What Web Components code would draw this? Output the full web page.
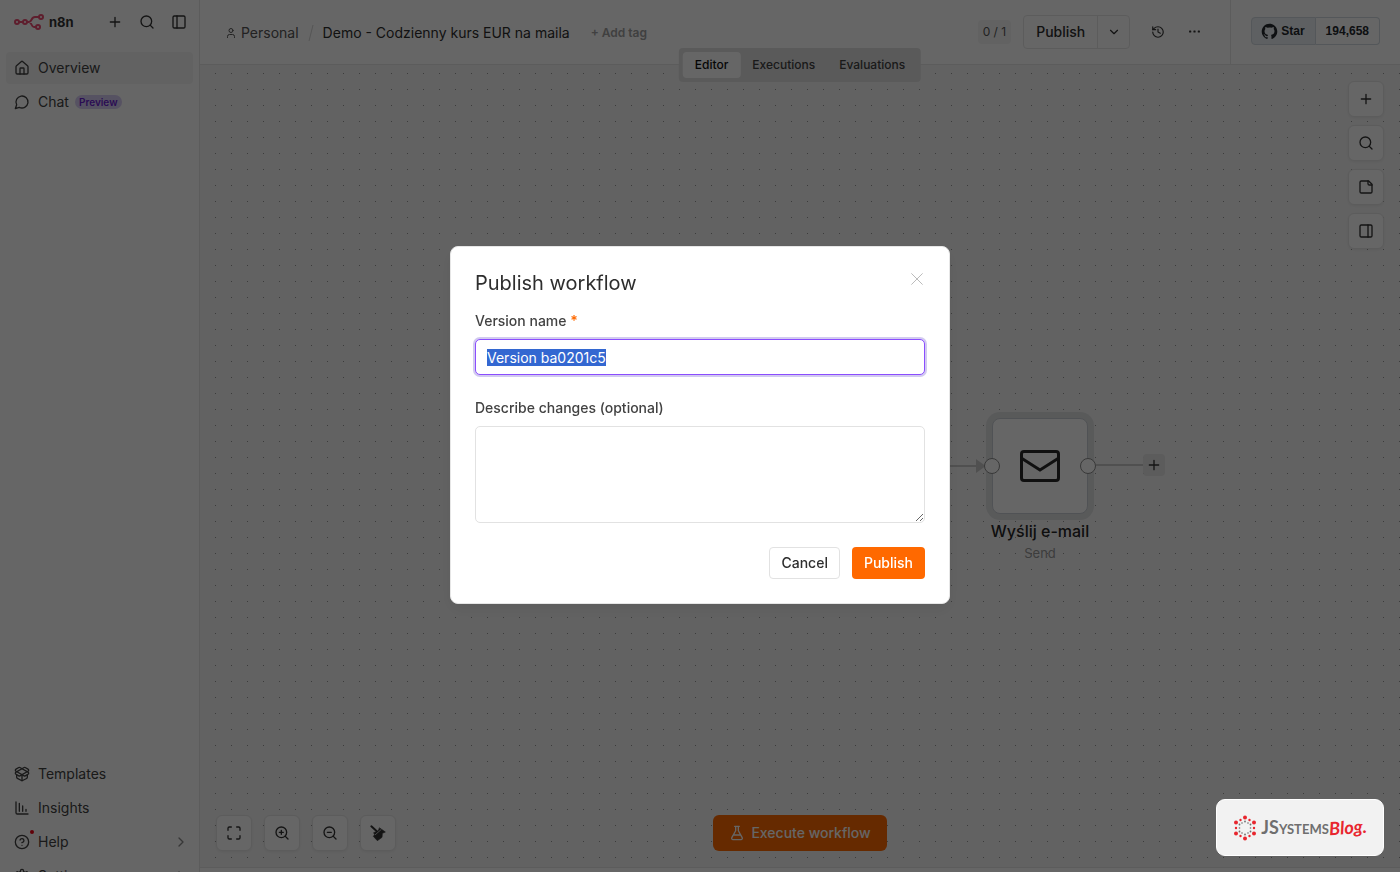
<!DOCTYPE html>
<html lang="en">
<head>
<meta charset="utf-8">
<meta name="viewport" content="width=device-width, initial-scale=1">
<title>n8n - Publish workflow</title>
<style>
  html, body { height: 100%; }
  body {
    margin: 0;
    overflow: hidden;
    font: 400 14px/20px Inter, "Liberation Sans", sans-serif;
    color: #424242;
    --line: #e6e6e6;
    --ink: #2e2e2e;
    --brand: #ff6900;
  }
</style>
</head>
<body>
<workflow-app></workflow-app>

<script>
const ICONS = {
  plus: '<path d="M5 12h14M12 5v14"/>',
  search: '<circle cx="11" cy="11" r="8"/><path d="m21 21-4.3-4.3"/>',
  panelLeft: '<rect width="18" height="18" x="3" y="3" rx="2"/><path d="M9 3v18"/>',
  panelRight: '<rect width="18" height="18" x="3" y="3" rx="2"/><path d="M15 3v18"/>',
  house: '<path d="M15 21v-8a1 1 0 0 0-1-1h-4a1 1 0 0 0-1 1v8"/><path d="M3 10a2 2 0 0 1 .709-1.528l7-5.999a2 2 0 0 1 2.582 0l7 5.999A2 2 0 0 1 21 10v9a2 2 0 0 1-2 2H5a2 2 0 0 1-2-2z"/>',
  chat: '<path d="M7.9 20A9 9 0 1 0 4 16.1L2 22Z"/>',
  box: '<path d="M12 22v-9"/><path d="M15.17 2.21a1.67 1.67 0 0 1 1.63 0L21 4.57a1.93 1.93 0 0 1 0 3.36L8.82 14.79a1.655 1.655 0 0 1-1.64 0L3 12.43a1.93 1.93 0 0 1 0-3.36z"/><path d="M20 13v3.87a2.06 2.06 0 0 1-1.11 1.83l-6 3.08a1.93 1.93 0 0 1-1.78 0l-6-3.08A2.06 2.06 0 0 1 4 16.87V13"/><path d="M21 12.43a1.93 1.93 0 0 0 0-3.36L8.83 2.2a1.64 1.64 0 0 0-1.63 0L3 4.57a1.93 1.93 0 0 0 0 3.36l12.18 6.86a1.636 1.636 0 0 0 1.63 0z"/>',
  chart: '<path d="M13 17V9M18 17v-3M8 17V5"/><path d="M3 3v16a2 2 0 0 0 2 2h16"/>',
  help: '<circle cx="12" cy="12" r="10"/><path d="M9.09 9a3 3 0 0 1 5.83 1c0 2-3 3-3 3M12 17h.01"/>',
  gear: '<path d="M12.22 2h-.44a2 2 0 0 0-2 2v.18a2 2 0 0 1-1 1.73l-.43.25a2 2 0 0 1-2 0l-.15-.08a2 2 0 0 0-2.73.73l-.22.38a2 2 0 0 0 .73 2.73l.15.1a2 2 0 0 1 1 1.72v.51a2 2 0 0 1-1 1.74l-.15.09a2 2 0 0 0-.73 2.73l.22.38a2 2 0 0 0 2.73.73l.15-.08a2 2 0 0 1 2 0l.43.25a2 2 0 0 1 1 1.73V20a2 2 0 0 0 2 2h.44a2 2 0 0 0 2-2v-.18a2 2 0 0 1 1-1.73l.43-.25a2 2 0 0 1 2 0l.15.08a2 2 0 0 0 2.73-.73l.22-.39a2 2 0 0 0-.73-2.73l-.15-.08a2 2 0 0 1-1-1.74v-.5a2 2 0 0 1 1-1.74l.15-.09a2 2 0 0 0 .73-2.73l-.22-.38a2 2 0 0 0-2.73-.73l-.15.08a2 2 0 0 1-2 0l-.43-.25a2 2 0 0 1-1-1.73V4a2 2 0 0 0-2-2z"/><circle cx="12" cy="12" r="3"/>',
  chevronRight: '<path d="m9 18 6-6-6-6"/>',
  chevronDown: '<path d="m6 9 6 6 6-6"/>',
  user: '<path d="M19 21v-2a4 4 0 0 0-4-4H9a4 4 0 0 0-4 4v2"/><circle cx="12" cy="7" r="4"/>',
  history: '<path d="M3 12a9 9 0 1 0 9-9 9.75 9.75 0 0 0-6.74 2.74L3 8"/><path d="M3 3v5h5M12 7v5l4 2"/>',
  dots: '<g fill="currentColor" stroke="none"><rect x="2" y="10" width="4" height="4" rx="1"/><rect x="10" y="10" width="4" height="4" rx="1"/><rect x="18" y="10" width="4" height="4" rx="1"/></g>',
  note: '<path d="M16 3H5a2 2 0 0 0-2 2v14a2 2 0 0 0 2 2h14a2 2 0 0 0 2-2V8Z"/><path d="M15 3v4a2 2 0 0 0 2 2h4"/>',
  maximize: '<path d="M8 3H5a2 2 0 0 0-2 2v3M21 8V5a2 2 0 0 0-2-2h-3M3 16v3a2 2 0 0 0 2 2h3M16 21h3a2 2 0 0 0 2-2v-3"/>',
  zoomIn: '<circle cx="11" cy="11" r="8"/><path d="m21 21-4.35-4.35M11 8v6M8 11h6"/>',
  zoomOut: '<circle cx="11" cy="11" r="8"/><path d="m21 21-4.35-4.35M8 11h6"/>',
  broom: '<path stroke-width="3" d="M2 2l9 8"/><path fill="currentColor" stroke-width="1" d="M14.500 4.500 23 10.500l-4.500 2-.5 6-7 5L5 17l2-2.500-1.500-3L12 9z"/><path stroke="#fff" stroke-width="1" d="M8 14.500 16.500 7"/>',
  flask: '<path d="M14 2v6a2 2 0 0 0 .245.96l5.51 10.08A2 2 0 0 1 18 22H6a2 2 0 0 1-1.755-2.96l5.51-10.08A2 2 0 0 0 10 8V2M6.453 15h11.094M8.5 2h7"/>',
  close: '<path d="M4 4l16 16M20 4 4 20"/>',
  github: '<path fill="currentColor" stroke="none" d="M12 1C5.925 1 1 5.925 1 12c0 4.867 3.149 8.979 7.521 10.436.55.096.756-.233.756-.522 0-.262-.013-1.128-.013-2.049-2.764.509-3.479-.674-3.699-1.292-.124-.317-.66-1.293-1.127-1.554-.385-.207-.936-.715-.014-.729.866-.014 1.485.797 1.691 1.128.99 1.663 2.571 1.196 3.204.907.096-.715.385-1.196.701-1.471-2.448-.275-5.005-1.224-5.005-5.432 0-1.196.426-2.186 1.128-2.956-.111-.275-.496-1.402.11-2.915 0 0 .921-.288 3.024 1.128a10.193 10.193 0 0 1 2.75-.371c.936 0 1.871.123 2.75.371 2.104-1.43 3.025-1.128 3.025-1.128.605 1.513.221 2.64.111 2.915.701.77 1.127 1.747 1.127 2.956 0 4.222-2.571 5.157-5.019 5.432.399.344.743 1.004.743 2.035 0 1.471-.014 2.654-.014 3.025 0 .289.206.632.756.522C19.851 20.979 23 16.854 23 12c0-6.075-4.925-11-11-11Z"/>'
};

const BASE = `
  *, *::before, *::after { box-sizing: border-box; }
  button { font: inherit; color: inherit; margin: 0; padding: 0; border: 0; background: none; cursor: pointer; }
  a { color: inherit; text-decoration: none; }
`;

function define(name, css, html, ready) {
  const template = document.createElement('template');
  customElements.define(name, class extends HTMLElement {
    connectedCallback() {
      if (this.shadowRoot) return;
      template.innerHTML = `<style>${BASE}${css}</style>` + (typeof html === 'function' ? html(this) : html);
      this.attachShadow({ mode: 'open' }).append(template.content.cloneNode(true));
      if (ready) ready(this.shadowRoot, this);
    }
  });
}

define('ui-icon', `
  :host { display: inline-flex; flex: none; }
  svg { display: block; fill: none; stroke: currentColor; stroke-linecap: round; stroke-linejoin: round; }
`, el => {
  const size = el.getAttribute('size') || 16;
  return `<svg width="${size}" height="${size}" viewBox="0 0 24 24" stroke-width="${el.getAttribute('weight') || 2}" aria-hidden="true">${ICONS[el.getAttribute('name')]}</svg>`;
});

/* Sidebar */
define('nav-item', `
  :host { display: block; }
  a { display: flex; align-items: center; gap: 8px; height: 32px; padding: 0 8px; border-radius: 4px; color: #424242; }
  :host([active]) a { background: #f5f5f5; }
  .icon { position: relative; display: flex; }
  .dot { position: absolute; top: -4px; right: -4px; width: 4px; height: 4px; border-radius: 50%; background: #f00015; }
  .more { margin-left: auto; color: #8a8a8a; display: flex; margin-right: -4px; }
`, el => `
  <a href="#">
    <span class="icon"><ui-icon name="${el.getAttribute('icon')}"></ui-icon>${el.hasAttribute('notify') ? '<span class="dot"></span>' : ''}</span>
    <slot></slot>
    ${el.hasAttribute('expandable') ? '<span class="more"><ui-icon name="chevronRight"></ui-icon></span>' : ''}
  </a>`);

define('preview-badge', `
  :host { display: block; padding: 0 4px; border-radius: 8px; background: #d8ccf5; color: #6b1fd1; font-size: 10px; line-height: 14px; font-weight: 600; margin-left: -2px; }
`, `<slot></slot>`);

define('side-bar', `
  :host { display: flex; flex-direction: column; width: 200px; flex: none; overflow: hidden; background: #fff; border-right: 1px solid var(--line); }
  header { display: flex; align-items: center; height: 44px; padding: 0 12px 0 14px; gap: 16px; color: #333; }
  .brand { display: flex; align-items: center; gap: 5px; margin-right: auto; font-size: 13px; font-weight: 700; }
  button { display: flex; }
  nav { display: flex; flex-direction: column; gap: 2px; padding: 8px 6px; flex: 1; }
  .foot { margin-top: auto; display: flex; flex-direction: column; gap: 2px; margin-bottom: -28px; }
`, `
  <header>
    <a class="brand" href="#">
      <svg width="30" height="16" viewBox="0 0 30 16" fill="none" stroke="#ea4b71" stroke-width="2" aria-hidden="true">
        <circle cx="3" cy="8" r="2"/><circle cx="11" cy="8" r="2"/><circle cx="27" cy="3" r="2"/><circle cx="24" cy="13" r="2"/>
        <path d="M5 8h4M13 8h2c3 0 2-5 6-5h4M15 8c3 0 2 5 5 5h2"/>
      </svg>
      <span>n8n</span>
    </a>
    <button aria-label="Create"><ui-icon name="plus"></ui-icon></button>
    <button aria-label="Search"><ui-icon name="search"></ui-icon></button>
    <button aria-label="Toggle sidebar"><ui-icon name="panelLeft"></ui-icon></button>
  </header>
  <nav>
    <nav-item icon="house" active>Overview</nav-item>
    <nav-item icon="chat">Chat <preview-badge>Preview</preview-badge></nav-item>
    <div class="foot">
      <nav-item icon="box">Templates</nav-item>
      <nav-item icon="chart">Insights</nav-item>
      <nav-item icon="help" notify expandable>Help</nav-item>
      <nav-item icon="gear" expandable>Settings</nav-item>
    </div>
  </nav>`);

/* Header */
define('github-stars', `
  :host { display: flex; height: 28px; font: 700 12px/26px "Liberation Sans", Arial, sans-serif; color: #25292e; }
  a { display: flex; align-items: center; border: 1px solid #d1d9e0; }
  .star { gap: 3px; padding: 0 10px 0 9px; background: #ebf0f4; border-radius: 4px 0 0 4px; }
  .count { padding: 0 10px; border-left: 0; border-radius: 0 4px 4px 0; background: #fff; }
`, `<a class="star" href="#"><ui-icon name="github" size="17"></ui-icon>Star</a><a class="count" href="#">194,658</a>`);

define('workflow-header', `
  :host { display: flex; height: 65px; flex: none; background: #fff; border-bottom: 1px solid var(--line); }
  .crumbs { display: flex; align-items: center; padding: 2px 0 0 25px; flex: 1; min-width: 0; white-space: nowrap; }
  .owner { display: flex; align-items: center; gap: 4px; color: #555; }
  .slash { width: 24px; display: flex; justify-content: center; }
  .name { color: var(--ink); }
  .tag { margin-left: 21px; font-size: 12px; font-weight: 600; color: #a0a0a0; }
  .actions { display: flex; align-items: center; color: #333; margin-bottom: 1px; }
  .count { padding: 0 5px; margin-right: 12px; line-height: 24px; border-radius: 4px; background: #f5f5f5; font-size: 12px; color: #555; }
  .split { display: flex; height: 34px; border: 1px solid var(--line); border-radius: 4px; margin-right: 20px; }
  .split button { display: flex; align-items: center; justify-content: center; padding: 0 12px; font-weight: 500; color: var(--ink); }
  .split button + button { padding: 0; width: 32px; border-left: 1px solid var(--line); }
  .icon { display: flex; justify-content: center; width: 16px; margin-right: 20px; }
  .icon + .icon { margin-right: 28px; }
  .stars { display: flex; align-items: center; padding: 0 20px; border-left: 1px solid var(--line); padding-bottom: 2px; }
`, `
  <div class="crumbs">
    <a class="owner" href="#"><ui-icon name="user" size="12"></ui-icon>Personal</a>
    <span class="slash"><svg width="8" height="18" viewBox="0 0 8 18" stroke="#d4d4d4" aria-hidden="true"><path d="M6 1 2 17"/></svg></span>
    <span class="name">Demo - Codzienny kurs EUR na maila</span>
    <button class="tag">+ Add tag</button>
  </div>
  <div class="actions">
    <span class="count">0 / 1</span>
    <div class="split"><button>Publish</button><button aria-label="Publish options"><ui-icon name="chevronDown" size="14"></ui-icon></button></div>
    <button class="icon" aria-label="History"><ui-icon name="history" size="14"></ui-icon></button>
    <button class="icon" aria-label="More"><ui-icon name="dots" size="13"></ui-icon></button>
  </div>
  <div class="stars"><github-stars></github-stars></div>`);

define('view-tabs', `
  :host { display: flex; padding: 4px; border-radius: 4px; background: #e2e2e2; }
  button { height: 26px; padding: 0 12px; border-radius: 4px; font-size: 12px; font-weight: 500; color: #424242; }
  [aria-selected=true] { background: #fff; color: #111; }
`, `<button role="tab" aria-selected="true">Editor</button><button role="tab">Executions</button><button role="tab">Evaluations</button>`);

/* Canvas */
define('tool-button', `
  :host { display: block; }
  button { display: flex; align-items: center; justify-content: center; width: 36px; height: 36px; border: 1px solid var(--line); border-radius: 6px; background: #fff; color: #333; box-shadow: 0 1px 3px #0000000f; }
`, el => `<button aria-label="${el.getAttribute('label')}"><ui-icon name="${el.getAttribute('icon')}"></ui-icon></button>`);

define('flow-node', `
  :host { display: block; width: 96px; text-align: center; }
  .card { position: relative; display: flex; align-items: center; justify-content: center; height: 96px; border: 1px solid #c9ced4; border-radius: 8px; background: #fff; box-shadow: 0 0 0 6px #dfe0e2; color: #2a2a2a; }
  .port { position: absolute; top: 39px; width: 16px; height: 16px; border: 1px solid #8c8c8c; border-radius: 50%; background: #fff; }
  .in { left: -9px; }
  .out { right: -9px; }
  .title { margin: 7px -40px 0; font-size: 16px; line-height: 20px; font-weight: 500; color: #262626; }
  .sub { margin-top: 3px; font-size: 13px; line-height: 18px; color: #999; }
`, `
  <div class="card">
    <svg width="40" height="32" viewBox="0 0 40 32" fill="none" stroke="currentColor" stroke-width="3" aria-hidden="true"><rect x="1.5" y="1.5" width="37" height="29" rx="2.5"/><path d="M2 8.500 20 20 38 8.500"/></svg>
    <span class="port in"></span><span class="port out"></span>
  </div>
  <div class="title"><slot></slot></div>
  <div class="sub"><slot name="subtitle"></slot></div>`);

define('flow-canvas', `
  :host { display: flex; flex-direction: column; position: relative; flex: 1; min-height: 0; overflow: hidden; background: #f5f5f5; }
  .grid { position: absolute; inset: 0; width: 100%; height: 100%; }
  .edges { position: absolute; top: 50%; left: 50%; width: 400px; height: 40px; margin-top: -20px; }
  flow-node { position: absolute; top: 50%; left: 50%; margin: -48px 0 0 192px; }
  .add { position: absolute; top: 50%; left: 50%; margin: -12px 0 0 343px; width: 22px; height: 22px; display: flex; align-items: center; justify-content: center; border-radius: 4px; background: #e6e6e6; color: #333; }
  .side { position: relative; display: flex; flex-direction: column; gap: 8px; align-self: flex-end; padding: 16px; }
  .foot { position: relative; margin-top: auto; display: grid; grid-template-columns: 1fr auto 1fr; align-items: center; padding: 16px; }
  .zoom { display: flex; gap: 12px; }
  .run { display: flex; align-items: center; gap: 6px; height: 36px; padding: 0 16px; border-radius: 6px; background: var(--brand); color: #fff; font-weight: 500; }
`, `
  <svg class="grid" aria-hidden="true"><defs><pattern id="dots" width="16" height="16" patternUnits="userSpaceOnUse"><rect x="15" y="8" width="1" height="1" fill="#969696"/></pattern></defs><rect width="100%" height="100%" fill="url(#dots)"/></svg>
  <svg class="edges" viewBox="0 0 400 40" fill="none" stroke="#c8c8c8" stroke-width="2" aria-hidden="true"><path d="M0 20h178M296 19h48"/><path d="M177 15l7 5-7 5z" fill="#c8c8c8"/></svg>
  <flow-node>Wyślij e-mail<span slot="subtitle">Send</span></flow-node>
  <button class="add" aria-label="Add node"><ui-icon name="plus"></ui-icon></button>
  <div class="side">
    <tool-button icon="plus" label="Add node"></tool-button>
    <tool-button icon="search" label="Search"></tool-button>
    <tool-button icon="note" label="Add note"></tool-button>
    <tool-button icon="panelRight" label="Toggle panel"></tool-button>
  </div>
  <div class="foot">
    <div class="zoom">
      <tool-button icon="maximize" label="Fit view"></tool-button>
      <tool-button icon="zoomIn" label="Zoom in"></tool-button>
      <tool-button icon="zoomOut" label="Zoom out"></tool-button>
      <tool-button icon="broom" label="Tidy up"></tool-button>
    </div>
    <button class="run"><ui-icon name="flask"></ui-icon>Execute workflow</button>
  </div>`);

/* Dialog */
define('publish-dialog', `
  :host { display: block; width: 500px; max-width: 100%; padding: 24px; border: 1px solid var(--line); border-radius: 8px; background: #fff; box-shadow: 0 6px 16px #0000000f; box-sizing: border-box; }
  header { display: flex; justify-content: space-between; align-items: flex-start; }
  h2 { margin: 0; font-size: 20px; line-height: 24px; font-weight: 400; color: var(--ink); }
  .close { display: flex; color: #999; }
  label { display: block; font-weight: 500; line-height: 20px; color: #424242; margin-bottom: 8px; }
  label b { color: var(--brand); font-weight: 600; }
  .body { display: flex; flex-direction: column; gap: 23px; margin-top: 16px; }
  input, textarea { display: block; width: 100%; font: inherit; color: #333; border: 1px solid #e2e2e2; border-radius: 5px; background: #fff; outline: none; }
  input { height: 36px; padding: 0 11px; }
  input:focus { border-color: #8b4dff; box-shadow: 0 0 0 2px #d2caf0; }
  input::selection { background: #3367d1; color: #fff; }
  textarea { height: 97px; padding: 8px 11px; resize: vertical; }
  footer { display: flex; justify-content: flex-end; gap: 12px; margin-top: 24px; }
  footer button { height: 32px; padding: 0 12px; border-radius: 4px; font-weight: 500; }
  footer .cancel { padding: 0 11px; border: 1px solid #e2e2e2; color: var(--ink); }
  .ok { background: var(--brand); color: #fff; }
`, `
  <header><h2 id="title">Publish workflow</h2><button class="close" aria-label="Close"><ui-icon name="close" size="16" weight="1"></ui-icon></button></header>
  <div class="body">
    <div><label for="version">Version name <b>*</b></label><input id="version" value="Version ba0201c5"></div>
    <div><label for="notes">Describe changes (optional)</label><textarea id="notes"></textarea></div>
  </div>
  <footer><button class="cancel">Cancel</button><button class="ok">Publish</button></footer>`,
  root => { const field = root.querySelector('#version'); field.focus(); field.select(); });

define('blog-badge', `
  :host { display: block; }
  a { display: flex; align-items: center; justify-content: center; gap: 4px; width: 168px; height: 57px; border: 1px solid #fff; border-radius: 9px; background: #f2f2f2; font-family: Lato, sans-serif; }
  .word { display: flex; align-items: baseline; line-height: 24px; }
  .name { color: #6f6f6f; font-size: 13px; font-weight: 700; }
  .name span { font-size: 18px; }
  .blog { color: #e8262e; font-size: 18px; font-weight: 700; font-style: italic; transform: rotate(-4deg); }
`, `
  <a href="#">
    <svg width="24" height="26" viewBox="0 0 24 26" aria-hidden="true">
      <g fill="#e8262e"><circle cx="12" cy="2.500" r="2"/><circle cx="3" cy="7.500" r="2"/><circle cx="21" cy="7.500" r="2"/><circle cx="3" cy="18.500" r="2"/><circle cx="21" cy="18.500" r="2"/><circle cx="12" cy="23.500" r="2"/>
      <circle cx="7.500" cy="5" r="1.200"/><circle cx="16.500" cy="5" r="1.200"/><circle cx="3" cy="13" r="1.200"/><circle cx="21" cy="13" r="1.200"/><circle cx="7.500" cy="21" r="1.200"/><circle cx="16.500" cy="21" r="1.200"/></g>
      <g fill="#6f6f6f"><circle cx="12" cy="6.500" r=".9"/><circle cx="9" cy="8" r=".8"/><circle cx="15" cy="8" r=".8"/><circle cx="6.500" cy="9.500" r=".9"/><circle cx="17.500" cy="9.500" r=".9"/><circle cx="6.500" cy="13" r=".8"/><circle cx="17.500" cy="13" r=".8"/><circle cx="6.500" cy="16.500" r=".9"/><circle cx="17.500" cy="16.500" r=".9"/><circle cx="9" cy="18" r=".8"/><circle cx="15" cy="18" r=".8"/><circle cx="12" cy="19.500" r=".9"/></g>
    </svg>
    <span class="word"><span class="name"><span>JS</span>YSTEMS</span><span class="blog">Blog.</span></span>
  </a>`);

define('workflow-app', `
  :host { display: flex; height: 100vh; }
  main { position: relative; display: flex; flex-direction: column; flex: 1; min-width: 0; }
  view-tabs { position: absolute; top: 48px; left: 50%; transform: translateX(-50%); }
  .logs { height: 5px; flex: none; border-top: 1px solid var(--line); background: #fff; }
  .scrim { position: fixed; inset: 0; display: flex; align-items: center; justify-content: center; padding-bottom: 22px; background: #00000099; }
  blog-badge { position: fixed; right: 16px; bottom: 16px; }
`, `
  <side-bar></side-bar>
  <main>
    <workflow-header></workflow-header>
    <flow-canvas></flow-canvas>
    <div class="logs"></div>
    <view-tabs role="tablist"></view-tabs>
  </main>
  <div class="scrim"><publish-dialog role="dialog" aria-modal="true" aria-label="Publish workflow"></publish-dialog></div>
  <blog-badge></blog-badge>`);
</script>
</body>
</html>
